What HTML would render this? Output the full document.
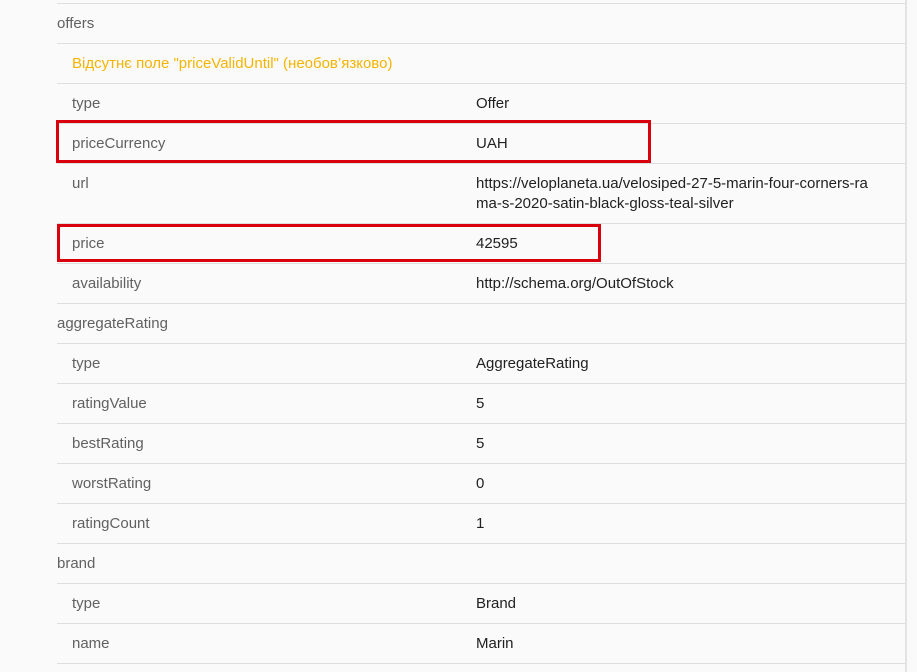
<!DOCTYPE html>
<html><head><meta charset="utf-8"><style>
body{margin:0;width:917px;height:672px;background:#fafafa;position:relative;overflow:hidden;font-family:"Liberation Sans",sans-serif;font-size:15px;}
.vl{position:absolute;left:905px;top:0;width:2px;height:672px;background:#e3e3e3}
.hl{position:absolute;left:57px;width:848px;height:1px;background:#dedede}
.t{position:absolute;color:#616161;line-height:20px;margin-top:1px}
.v{position:absolute;left:476px;color:#212121;line-height:20px;margin-top:1px}
.box{position:absolute;border:3px solid #d9000d;box-sizing:border-box}
</style></head><body>
<div class="vl"></div>
<div class="hl" style="top:3px"></div>
<div class="t" style="left:57px;top:13px">offers</div>
<div class="hl" style="top:43px"></div>
<div class="t" style="left:72px;top:53px;color:#f4b400">Відсутнє поле "priceValidUntil" (необов’язково)</div>
<div class="hl" style="top:83px"></div>
<div class="t" style="left:72px;top:93px">type</div><div class="v" style="top:93px">Offer</div>
<div class="hl" style="top:123px"></div>
<div class="t" style="left:72px;top:133px">priceCurrency</div><div class="v" style="top:133px">UAH</div>
<div class="hl" style="top:163px"></div>
<div class="t" style="left:72px;top:173px">url</div><div class="v" style="top:173px">https://veloplaneta.ua/velosiped-27-5-marin-four-corners-ra<br>ma-s-2020-satin-black-gloss-teal-silver</div>
<div class="hl" style="top:223px"></div>
<div class="t" style="left:72px;top:233px">price</div><div class="v" style="top:233px">42595</div>
<div class="hl" style="top:263px"></div>
<div class="t" style="left:72px;top:273px">availability</div><div class="v" style="top:273px">http://schema.org/OutOfStock</div>
<div class="hl" style="top:303px"></div>
<div class="t" style="left:57px;top:313px">aggregateRating</div>
<div class="hl" style="top:343px"></div>
<div class="t" style="left:72px;top:353px">type</div><div class="v" style="top:353px">AggregateRating</div>
<div class="hl" style="top:383px"></div>
<div class="t" style="left:72px;top:393px">ratingValue</div><div class="v" style="top:393px">5</div>
<div class="hl" style="top:423px"></div>
<div class="t" style="left:72px;top:433px">bestRating</div><div class="v" style="top:433px">5</div>
<div class="hl" style="top:463px"></div>
<div class="t" style="left:72px;top:473px">worstRating</div><div class="v" style="top:473px">0</div>
<div class="hl" style="top:503px"></div>
<div class="t" style="left:72px;top:513px">ratingCount</div><div class="v" style="top:513px">1</div>
<div class="hl" style="top:543px"></div>
<div class="t" style="left:57px;top:553px">brand</div>
<div class="hl" style="top:583px"></div>
<div class="t" style="left:72px;top:593px">type</div><div class="v" style="top:593px">Brand</div>
<div class="hl" style="top:623px"></div>
<div class="t" style="left:72px;top:633px">name</div><div class="v" style="top:633px">Marin</div>
<div class="hl" style="top:663px"></div>
<div class="box" style="left:56px;top:120px;width:595px;height:43px"></div>
<div class="box" style="left:57px;top:224px;width:544px;height:38px"></div>
</body></html>
